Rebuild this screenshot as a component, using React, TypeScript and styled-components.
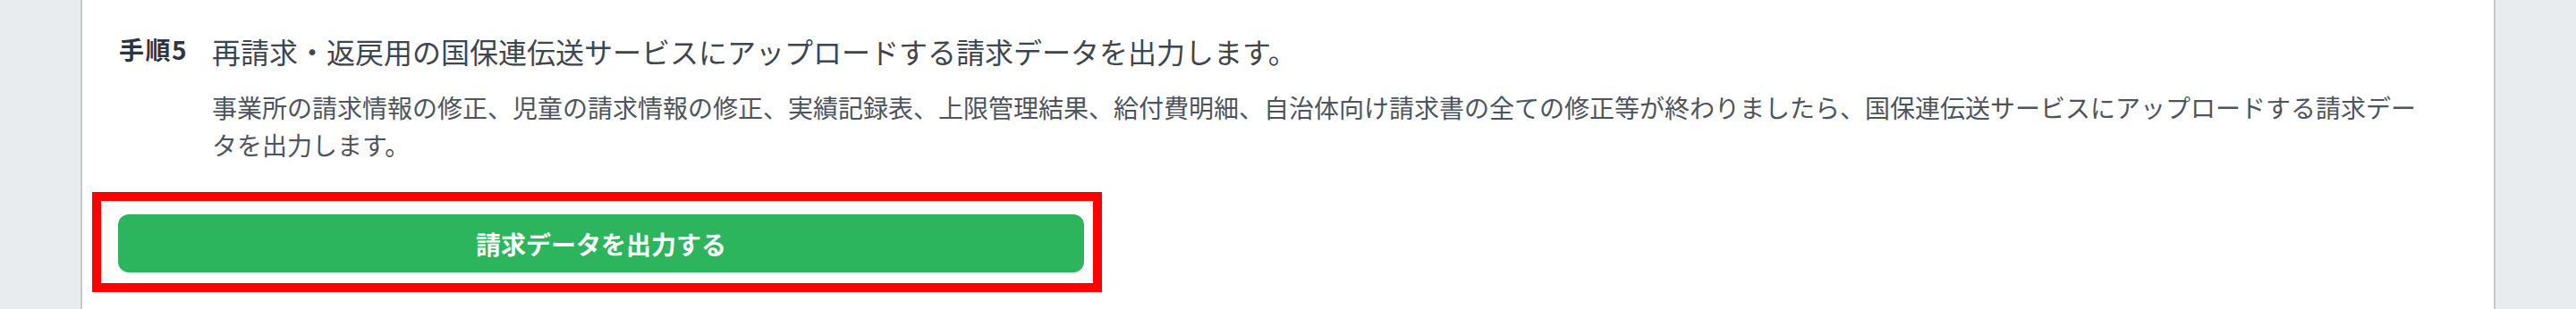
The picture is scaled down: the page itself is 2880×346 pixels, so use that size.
import React from 'react';
import styled, { createGlobalStyle } from 'styled-components';

const GlobalStyle = createGlobalStyle`
  html, body {
    margin: 0;
    padding: 0;
    background: #e9ecef;
  }
  body {
    font-family: "Noto Sans CJK JP", "Noto Sans", sans-serif;
  }
`;

const Page = styled.div`
  display: flex;
  width: 2880px;
  height: 346px;
  padding: 0 90px;
  box-sizing: border-box;
  background: #e9ecef;
`;

const Card = styled.section`
  flex: 1;
  display: flex;
  flex-direction: column;
  background: #ffffff;
  border-left: 2px solid #c6cacd;
  border-right: 2px solid #c6cacd;
  padding: 33px 72px 18px 41px;
`;

const Step = styled.div`
  display: grid;
  grid-template-columns: 104px 1fr;
  grid-template-rows: auto auto;
`;

const StepLabel = styled.div`
  font-size: 28px;
  font-weight: 700;
  line-height: 44px;
  letter-spacing: 1.5px;
  color: #2e3440;
  white-space: nowrap;
`;

const StepTitle = styled.h2`
  margin: 0;
  font-size: 32px;
  font-weight: 400;
  line-height: 48px;
  color: #3f454d;
`;

const StepText = styled.p`
  grid-column: 2;
  margin: 18px 0 0;
  font-size: 28px;
  font-weight: 400;
  line-height: 42px;
  color: #4e545b;
`;

const Highlight = styled.div`
  align-self: flex-start;
  margin: 32px 0 0 -30px;
  border: 10px solid #ff0000;
  padding: 15px 10px 12px 19px;
  background: #ffffff;
`;

const PrimaryButton = styled.button`
  display: flex;
  align-items: center;
  justify-content: center;
  width: 1080px;
  height: 65px;
  border: none;
  border-radius: 12px;
  background: #2db55d;
  color: #ffffff;
  font-family: inherit;
  font-size: 28px;
  font-weight: 700;
  cursor: pointer;
`;

const App = () => {
  return (
    <>
      <GlobalStyle />
      <Page>
        <Card>
          <Step>
            <StepLabel>手順5</StepLabel>
            <StepTitle>
              再請求・返戻用の国保連伝送サービスにアップロードする請求データを出力します。
            </StepTitle>
            <StepText>
              事業所の請求情報の修正、児童の請求情報の修正、実績記録表、上限管理結果、給付費明細、自治体向け請求書の全ての修正等が終わりましたら、国保連伝送サービスにアップロードする請求データを出力します。
            </StepText>
          </Step>
          <Highlight>
            <PrimaryButton>請求データを出力する</PrimaryButton>
          </Highlight>
        </Card>
      </Page>
    </>
  );
};

export default App;
